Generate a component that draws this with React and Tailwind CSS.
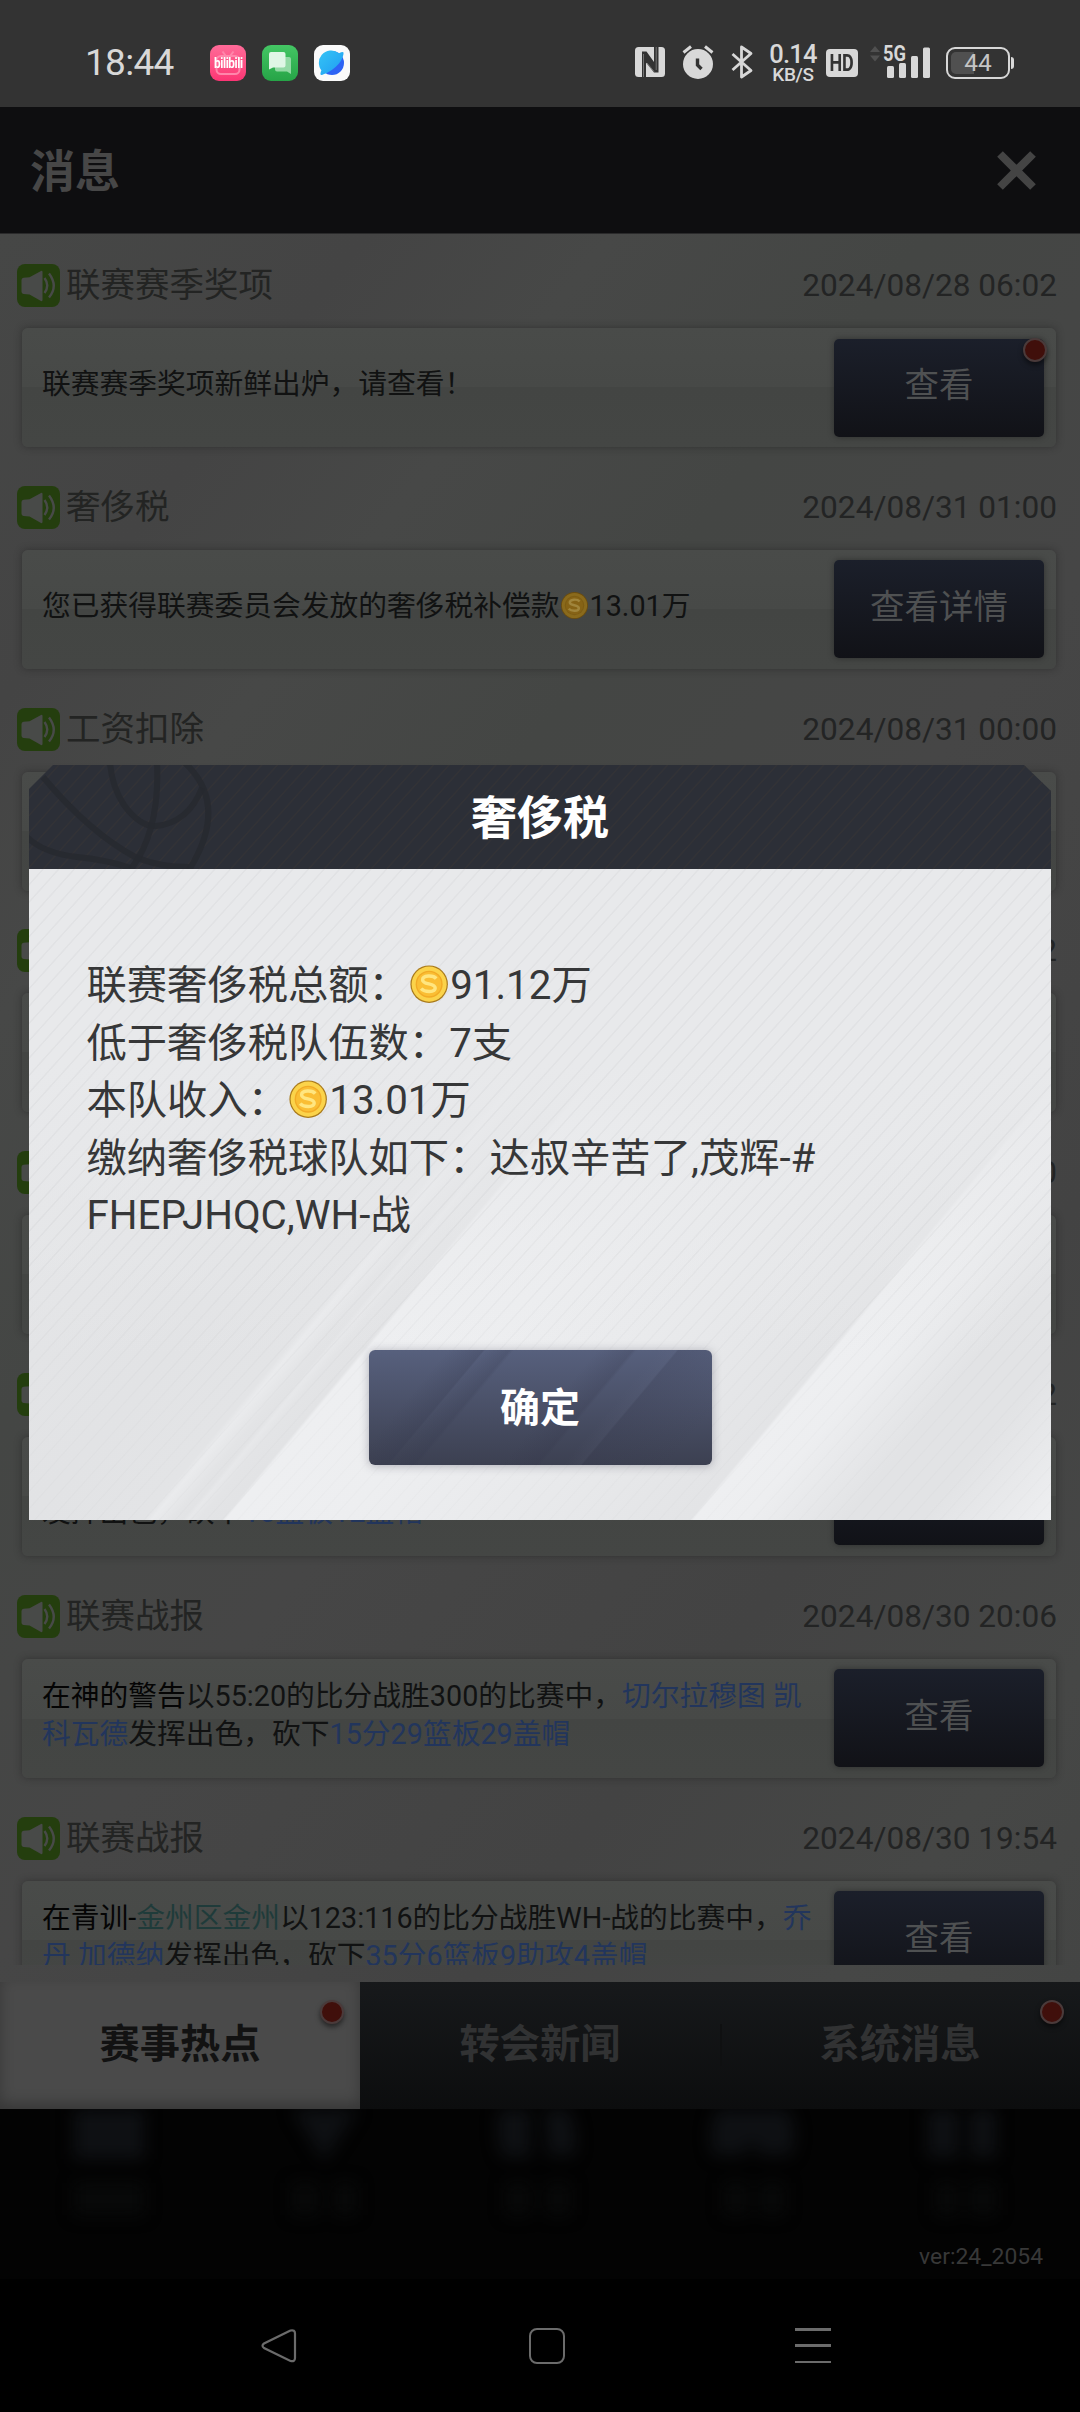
import React from "react";

const FONT = "font-[Roboto,'Noto_Sans_CJK_SC',sans-serif]";

function Coin({ className, dim }) {
  return (
    <svg viewBox="0 0 40 40" className={className}>
      <circle cx="20" cy="20" r="18.6" fill={dim ? "#6b4d10" : "#a97a1c"} />
      <circle cx="20" cy="20" r="17.4" fill={dim ? "#8a6a1c" : "#fbd34a"} />
      <circle cx="20" cy="20" r="13.4" fill={dim ? "#7d5c14" : "#f2ab26"} />
      <circle cx="20" cy="20" r="12" fill={dim ? "#866316" : "#fabe34"} />
      <path
        d="M27 14.500c-3-3.800-13.500-3.500-13.500 1.300 0 5 12.500 2.900 12.500 8 0 4.700-10.500 4.400-14 .700"
        fill="none"
        stroke={dim ? "#a0853c" : "#ffe680"}
        strokeWidth="3.400"
      />
    </svg>
  );
}

function Speaker() {
  return (
    <svg viewBox="0 0 43 43" className="h-[43px] w-[43px] shrink-0">
      <rect width="43" height="43" rx="8" fill="#243e0e" />
      <path d="M4.500 16q0-2 2-2.200l6-.600L24 7q1.500-.600 1.500 1v28q0 1.600-1.500 1L12.500 30.500l-6-.600q-2-.200-2-2.200z" fill="#484a48" />
      <path d="M27.500 14q5.500 7.500 0 15M32 9.500q9.500 12.500 0 24" fill="none" stroke="#484a48" strokeWidth="2.400" />
    </svg>
  );
}

function Dot({ className }) {
  return (
    <span className={"absolute h-[24px] w-[24px] rounded-full border-2 border-[#4a3a3a] bg-[#400f0b] shadow-[0_3px_5px_rgba(0,0,0,0.5)] " + className} />
  );
}

function Blue({ children }) {
  return <span className="text-[#22355c]">{children}</span>;
}

const rows = [
  { title: "联赛赛季奖项", date: "2024/08/28 06:02", button: "查看", dot: true, lines: ["联赛赛季奖项新鲜出炉，请查看！"] },
  {
    title: "奢侈税",
    date: "2024/08/31 01:00",
    button: "查看详情",
    lines: [
      <>
        您已获得联赛委员会发放的奢侈税补偿款
        <Coin dim className="-mt-[2px] mr-[1px] h-[29px] w-[29px]" />
        13.01万
      </>,
    ],
  },
  { title: "工资扣除", date: "2024/08/31 00:00", lines: [] },
  { title: "", date: "2", lines: [] },
  { title: "", date: "0", lines: [] },
  {
    title: "",
    date: "2",
    button: "",
    lines: [
      "",
      <>
        发挥出色，砍下<Blue>10篮板12盖帽</Blue>
      </>,
    ],
  },
  {
    title: "联赛战报",
    date: "2024/08/30 20:06",
    button: "查看",
    lines: [
      <>
        <span className="text-[#050505]">在神的警告</span>以55:20的比分战胜300的比赛中，<Blue>切尔拉穆图&nbsp;凯</Blue>
      </>,
      <>
        <Blue>科瓦德</Blue>发挥出色，砍下<Blue>15分29篮板29盖帽</Blue>
      </>,
    ],
  },
  {
    title: "联赛战报",
    date: "2024/08/30 19:54",
    button: "查看",
    lines: [
      <>
        <span className="text-[#050505]">在青训-</span>
        <span className="text-[#1f3b3a]">金州区金州</span>以123:116的比分战胜WH-战的比赛中，<Blue>乔</Blue>
      </>,
      <>
        <Blue>丹&nbsp;加德纳</Blue>发挥出色，砍下<Blue>35分6篮板9助攻4盖帽</Blue>
      </>,
    ],
  },
];

function Row({ row }) {
  return (
    <div className="h-[221.8px] shrink-0 pt-[30px]">
      <div className="flex h-[43px] items-center pr-[23px] pl-[17px]">
        <Speaker />
        <span className="ml-[6px] text-[34.500px] leading-[43px] whitespace-nowrap text-[#232423]">{row.title}</span>
        <span className="ml-auto text-[31.600px] leading-[43px] whitespace-nowrap text-[#232424]">{row.date}</span>
      </div>
      <div className="mt-[21px] mr-[24px] ml-[22px] flex h-[119px] items-center justify-between rounded-[6px] bg-[linear-gradient(180deg,#494b49_0%,#474947_50%,#434543_50%,#444644_100%)] pr-[12px] pl-[20px] shadow-[0_0_7px_rgba(30,30,30,0.5)]">
        <div className="pb-[5px] text-[28.750px] text-[#111212]">
          {row.lines.map((line, i) => (
            <div key={i} className="flex h-[37.5px] items-center leading-[37.5px] whitespace-pre">
              <div className="flex items-center">{line}</div>
            </div>
          ))}
        </div>
        {row.button !== undefined && (
          <div className="relative flex h-[98px] w-[210px] items-center justify-center rounded-[5px] bg-[linear-gradient(180deg,#1b1f2a,#111217)] pb-[3px] text-[34.500px] text-[#4f5152] shadow-[0_0_6px_rgba(0,0,0,0.35)]">
            {row.button}
            {row.dot && <Dot className="-top-[1px] -right-[3px]" />}
          </div>
        )}
      </div>
    </div>
  );
}

function StatusBar() {
  return (
    <div className="flex h-[107px] shrink-0 items-start bg-[#333333] pt-[44px] text-[#d8d8d8]">
      <span className="ml-[85px] w-[125px] text-[37px] leading-[38px] tracking-[-0.700px]">18:44</span>
      <div className="flex gap-[16px] pt-[1px]">
        <div className="relative flex h-[36px] w-[36px] items-center justify-center rounded-[9px] bg-linear-to-b from-[#ff6a98] to-[#fb3474]">
          <svg viewBox="0 0 36 36" className="absolute h-[36px] w-[36px]">
            <rect x="6.500" y="11" width="23" height="18" rx="4.500" fill="none" stroke="#ff86ab" strokeWidth="2" />
            <path d="M12.500 6.500l3 4M23.500 6.500l-3 4" stroke="#ff86ab" strokeWidth="2" />
          </svg>
          <span className="relative scale-x-[0.780] text-[15px] leading-none font-bold tracking-[-0.500px] text-white">bilibili</span>
        </div>
        <svg viewBox="0 0 36 36" className="h-[36px] w-[36px]">
          <defs>
            <linearGradient id="msg" x1="0" y1="0" x2="0" y2="1">
              <stop offset="0" stopColor="#44c664" />
              <stop offset="1" stopColor="#26a447" />
            </linearGradient>
          </defs>
          <rect width="36" height="36" rx="9" fill="url(#msg)" />
          <path d="M15 12h12q2 0 2 2v15l-4-2.500H15q-2 0-2-2V14q0-2 2-2z" fill="#92d9a4" />
          <path d="M9 7h12.500q2 0 2 2v11.500q0 2-2 2H11l-4 2V9q0-2 2-2z" fill="#dff6e5" />
        </svg>
        <svg viewBox="0 0 36 36" className="h-[36px] w-[36px]">
          <defs>
            <linearGradient id="web" x1="0" y1="0" x2="1" y2="1">
              <stop offset="0" stopColor="#35c4f5" />
              <stop offset="1" stopColor="#1f9cf2" />
            </linearGradient>
          </defs>
          <rect width="36" height="36" rx="9" fill="#fafafa" />
          <circle cx="18" cy="18" r="12" fill="#2d63f4" />
          <path d="M9.500 27.500A12 12 0 0 1 25 8.200Q29 6 29.500 7.500 30 12 25 18.500 18 26.500 9 29.500 6 31 6.500 28 7 25.500 8 24z" fill="url(#web)" />
        </svg>
      </div>
      <svg viewBox="0 0 30 30" className="mt-[3px] ml-[285px] h-[30px] w-[30px]">
        <rect width="30" height="30" rx="3.500" fill="#d8d8d8" />
        <path d="M7 4.500h4.500L19 15v5.500l-8-9V30H7z" fill="#333" />
        <path d="M23.500 25.500H19L11 15.500V9.500l8 9.500V0h4.500z" fill="#333" />
        <path d="M10 5.500l9 11V24l-9-10z" fill="#333" />
        <path d="M8.500 7v23M21.200 0v23M12 16l7 8.500" fill="none" stroke="#d8d8d8" strokeWidth=".8" opacity=".5" />
      </svg>
      <svg viewBox="0 0 32 34" className="mt-[1px] ml-[17px] h-[34px] w-[32px]">
        <circle cx="16" cy="19" r="15" fill="#d8d8d8" />
        <path d="M1.500 7.500l7.500-6M30.500 7.500l-7.500-6" stroke="#d8d8d8" strokeWidth="3" />
        <path d="M15.500 13.500v6.500l4 4" fill="none" stroke="#333" strokeWidth="3.400" />
      </svg>
      <svg viewBox="0 0 22 34" className="mt-[1px] ml-[17px] h-[34px] w-[22px]">
        <path d="M1.500 9L20 25.500l-9.500 6.500V2L20 8.500 1.500 25" fill="none" stroke="#d8d8d8" strokeWidth="2.800" strokeLinejoin="round" />
      </svg>
      <div className="ml-[16px] flex w-[48px] flex-col items-center font-medium">
        <span className="text-[25.500px] leading-[20px] tracking-[-0.800px]">0.14</span>
        <span className="mt-[3px] text-[19px] leading-[16px] tracking-[-0.400px]">KB/S</span>
      </div>
      <div className="mt-[5px] ml-[9px] flex h-[28px] w-[32px] items-center justify-center rounded-[4px] bg-[#d8d8d8] text-[23px] leading-none font-bold text-[#333]">
        <span className="scale-x-[0.780]">HD</span>
      </div>
      <svg viewBox="0 0 62 34" className="mt-[1px] ml-[11px] h-[34px] w-[62px] overflow-visible">
        <path d="M1 7l5-6 5 6zM1 10.500l5 6 5-6z" fill="#505050" />
        <rect x="18" y="21" width="7" height="12" rx="1.500" fill="#d8d8d8" />
        <rect x="30" y="18" width="7" height="15" rx="1.500" fill="#d8d8d8" />
        <rect x="42" y="11" width="7" height="22" rx="1.500" fill="#d8d8d8" />
        <rect x="54" y="2.500" width="7" height="30.500" rx="1.500" fill="#d8d8d8" />
        <text x="14" y="16" fontSize="21.500" fontWeight="700" textLength="23" lengthAdjust="spacingAndGlyphs" fill="#d8d8d8">5G</text>
      </svg>
      <div className="mt-[3px] ml-[15px] flex h-[32px] w-[64px] items-center rounded-[9px] border-2 border-[#d8d8d8] p-[3px]">
        <div className="flex h-full w-full items-center justify-center rounded-[5px] bg-[linear-gradient(90deg,#505050_43%,transparent_43%)] text-[24.500px] leading-none text-[#c4c4c4]">44</div>
      </div>
      <div className="mt-[13px] ml-[1px] h-[12px] w-[2.5px] rounded-r bg-[#d8d8d8]" />
    </div>
  );
}

function Tabs() {
  return (
    <div className="grid h-[127px] shrink-0 grid-cols-3 bg-[linear-gradient(180deg,#17191b,#0c0d0e)] text-[40.300px] font-bold text-[#313233]">
      <div className="relative flex items-center justify-center bg-[#4a4a4a] text-[#121212] shadow-[inset_0_-6px_14px_rgba(0,0,0,0.25)]">
        赛事热点
        <Dot className="top-[18px] right-[16px]" />
      </div>
      <div className="flex items-center justify-center">转会新闻</div>
      <div className="relative flex items-center justify-center">
        <span className="absolute top-[42px] left-0 h-[42px] w-[2px] bg-[#0f1011]" />
        系统消息
        <Dot className="top-[18px] right-[16px]" />
      </div>
    </div>
  );
}

function Footer() {
  return (
    <div className="relative flex h-[170px] shrink-0 items-end justify-end overflow-hidden bg-[#030303] pr-[37px] pb-[7px]">
      <svg viewBox="0 0 1080 170" className="absolute inset-0 h-[170px] w-[1080px] blur-[8px]">
        <g fill="#0e1013">
          <path d="M74-10h70v60H74zM286-10h78l-40 62zM500-10h30v58h-24q-12-4-6-58zM544-10h20q16 30 10 56h-26zM722-10h60q20 30 8 56h-30l-8-14-8 14h-30q-10-24 8-56zM928-10h68v58h-26V0h-12v48h-30z" />
        </g>
        <g fill="#080909">
          <path d="M74 74h70v32H74zM292 74h26v32h-26zM334 74h22v32h-22zM506 74h24v32h-24zM546 74h24v32h-24zM724 74h24v32h-24zM760 74h24v32h-24zM936 74h22v32h-22zM970 74h26v32h-26z" />
        </g>
      </svg>
      <span className="relative text-[22.900px] leading-[30px] text-[#383838]">ver:24_2054</span>
    </div>
  );
}

function NavBar() {
  return (
    <div className="flex h-[133px] shrink-0 items-center bg-black">
      <svg viewBox="0 0 36 36" className="ml-[261px] h-[36px] w-[36px]">
        <path d="M29.500 2.500L3 15.500q-3 2 0 4.500l26.500 13q4.500 1 4.500-3V5.500q0-4-4.500-3z" fill="none" stroke="#6b6b6b" strokeWidth="2.200" />
      </svg>
      <div className="ml-[232px] h-[36px] w-[36px] rounded-[8px] border-[2.5px] border-[#6b6b6b]" />
      <div className="ml-[230px] flex h-[35px] w-[36px] flex-col justify-between">
        <span className="h-[2.5px] bg-[#6b6b6b]" />
        <span className="h-[2.5px] bg-[#6b6b6b]" />
        <span className="h-[2.5px] bg-[#6b6b6b]" />
      </div>
    </div>
  );
}

const bands = [
  [577, "#e6e7e9"], [993, "#e2e3e5"], [1082, "#e3e4e6"], [1088, "#eaebed"], [1104, "#e3e4e6"], [1112, "#e2e3e5"],
  [1116, "#e7e8ea"], [1124, "#e3e4e6"], [1142, "#e2e3e5"], [1145, "#eeeff1"], [1240, "#edeef0"], [1380, "#e8e9eb"],
  [1502, "#e3e4e6"], [1505, "#eeeff1"], [1545, "#edeef0"], [1585, "#e7e8ea"], [1620, "#e2e3e5"], [1680, "#e2e3e5"],
  [1740, "#e9eaec"], [1779, "#eeeff1"],
];

function Dialog() {
  return (
    <div className="absolute top-[765px] left-[29px] flex h-[755px] w-[1022px] flex-col">
      <div className="relative flex h-[104px] shrink-0 items-center justify-center overflow-hidden bg-[#2c2f37] [clip-path:polygon(24px_0,995px_0,100%_26px,100%_100%,0_100%,0_24px)]">
        <div className="absolute inset-0 bg-[repeating-linear-gradient(132deg,transparent_0px,transparent_9.5px,#323236_10.2px,#323236_11px,transparent_11.6px)]" />
        <svg viewBox="29 765 1022 104" className="absolute inset-0 h-[104px] w-[1022px]">
          <g fill="none" stroke="#27292f" strokeWidth="6" strokeOpacity=".85">
            <path d="M184 762q46 42 5 108" />
            <path d="M43 777q46 55 92 80 24 10 54 10" />
            <path d="M27 837q16 16 50 20 30 3 54 11" />
            <path d="M110 763q2 24 14 42 16 22 32 21 32-3 46-38" />
            <path d="M157 763q3 68-26 106" />
          </g>
        </svg>
        <span className="relative pt-[3px] text-[46px] font-bold text-white">奢侈税</span>
      </div>
      <div className="relative grow overflow-hidden bg-[#e8e9eb]">
        <svg viewBox="29 869 1022 651" className="absolute inset-0 h-[651px] w-[1022px]">
          <defs>
            <linearGradient id="bands" gradientUnits="userSpaceOnUse" x1="443.700" y1="368.700" x2="1368" y2="1136.800">
              {bands.map(([t, c]) => (
                <stop key={t} offset={(t - 577) / 1202} stopColor={c} />
              ))}
            </linearGradient>
            <linearGradient id="fade" x1="0" y1="0" x2="0" y2="1">
              <stop offset="0" stopColor="#e8e9eb" />
              <stop offset=".3" stopColor="#e8e9eb" />
              <stop offset=".75" stopColor="#e8e9eb" stopOpacity="0" />
            </linearGradient>
          </defs>
          <rect x="29" y="868" width="1022" height="652" fill="url(#bands)" />
          <rect x="29" y="868" width="1022" height="652" fill="url(#fade)" />
        </svg>
        <div className="absolute inset-0 bg-[repeating-linear-gradient(132deg,transparent_0px,transparent_9.5px,rgba(120,120,125,0.06)_10.2px,rgba(120,120,125,0.06)_11px,transparent_11.6px)] [mask-image:linear-gradient(180deg,#000_55%,rgba(0,0,0,0.3)_85%)]" />
        <div className="relative mt-[88px] ml-[57.500px] text-[40.300px] leading-[57.600px] whitespace-nowrap text-[#363738]">
          <div className="flex h-[57.6px] items-center">
            联赛奢侈税总额：
            <Coin className="-mt-[4px] mr-[1px] h-[40.300px] w-[40.300px]" />
            91.12万
          </div>
          <div className="h-[57.6px]">低于奢侈税队伍数：7支</div>
          <div className="flex h-[57.6px] items-center">
            本队收入：
            <Coin className="-mt-[4px] mr-[1px] h-[40.300px] w-[40.300px]" />
            13.01万
          </div>
          <div className="h-[57.6px]">缴纳奢侈税球队如下：达叔辛苦了,茂辉-#</div>
          <div className="h-[57.6px]">FHEPJHQC,WH-战</div>
        </div>
        <div className="relative mx-auto mt-[105px] flex h-[115px] w-[343px] items-center justify-center rounded-[6px] bg-[linear-gradient(130deg,transparent_18%,rgba(50,54,75,0.22)_26%,transparent_26.5%,rgba(50,54,75,0.2)_32%,transparent_33%,transparent_52%,rgba(50,52,72,0.2)_60%,transparent_61%,transparent_66%,rgba(110,115,140,0.08)_70%,rgba(50,52,72,0.18)_70.5%,transparent_90%),linear-gradient(180deg,#57607d,#3c4051)] pt-[4px] text-[40px] font-bold text-white shadow-[0_1px_10px_rgba(60,60,80,0.35)]">
          确定
        </div>
      </div>
    </div>
  );
}

export default function App() {
  return (
    <div className={"relative flex h-[2412px] w-[1080px] flex-col overflow-hidden bg-black " + FONT}>
      <StatusBar />
      <div className="flex h-[127px] shrink-0 items-center justify-between border-b border-[#2a2a2b] bg-[#0e0e10] pr-[43px] pl-[30px]">
        <span className="pt-[5px] text-[45px] font-bold text-[#474747]">消息</span>
        <svg viewBox="0 0 41 41" className="h-[41px] w-[41px]">
          <path d="M4 4l33 33M37 4L4 37" stroke="#444444" strokeWidth="8" />
        </svg>
      </div>
      <div className="h-[1748px] shrink-0 bg-[linear-gradient(128deg,#464746_0%,#444444_15%,#474847_25%,#444644_38%,#464646_55%,#434343_75%,#464746_90%,#444544_100%)]">
        <div className="flex h-[1731px] flex-col overflow-hidden">
          {rows.map((row, i) => (
            <Row key={i} row={row} />
          ))}
        </div>
      </div>
      <Tabs />
      <Footer />
      <NavBar />
      <Dialog />
    </div>
  );
}
